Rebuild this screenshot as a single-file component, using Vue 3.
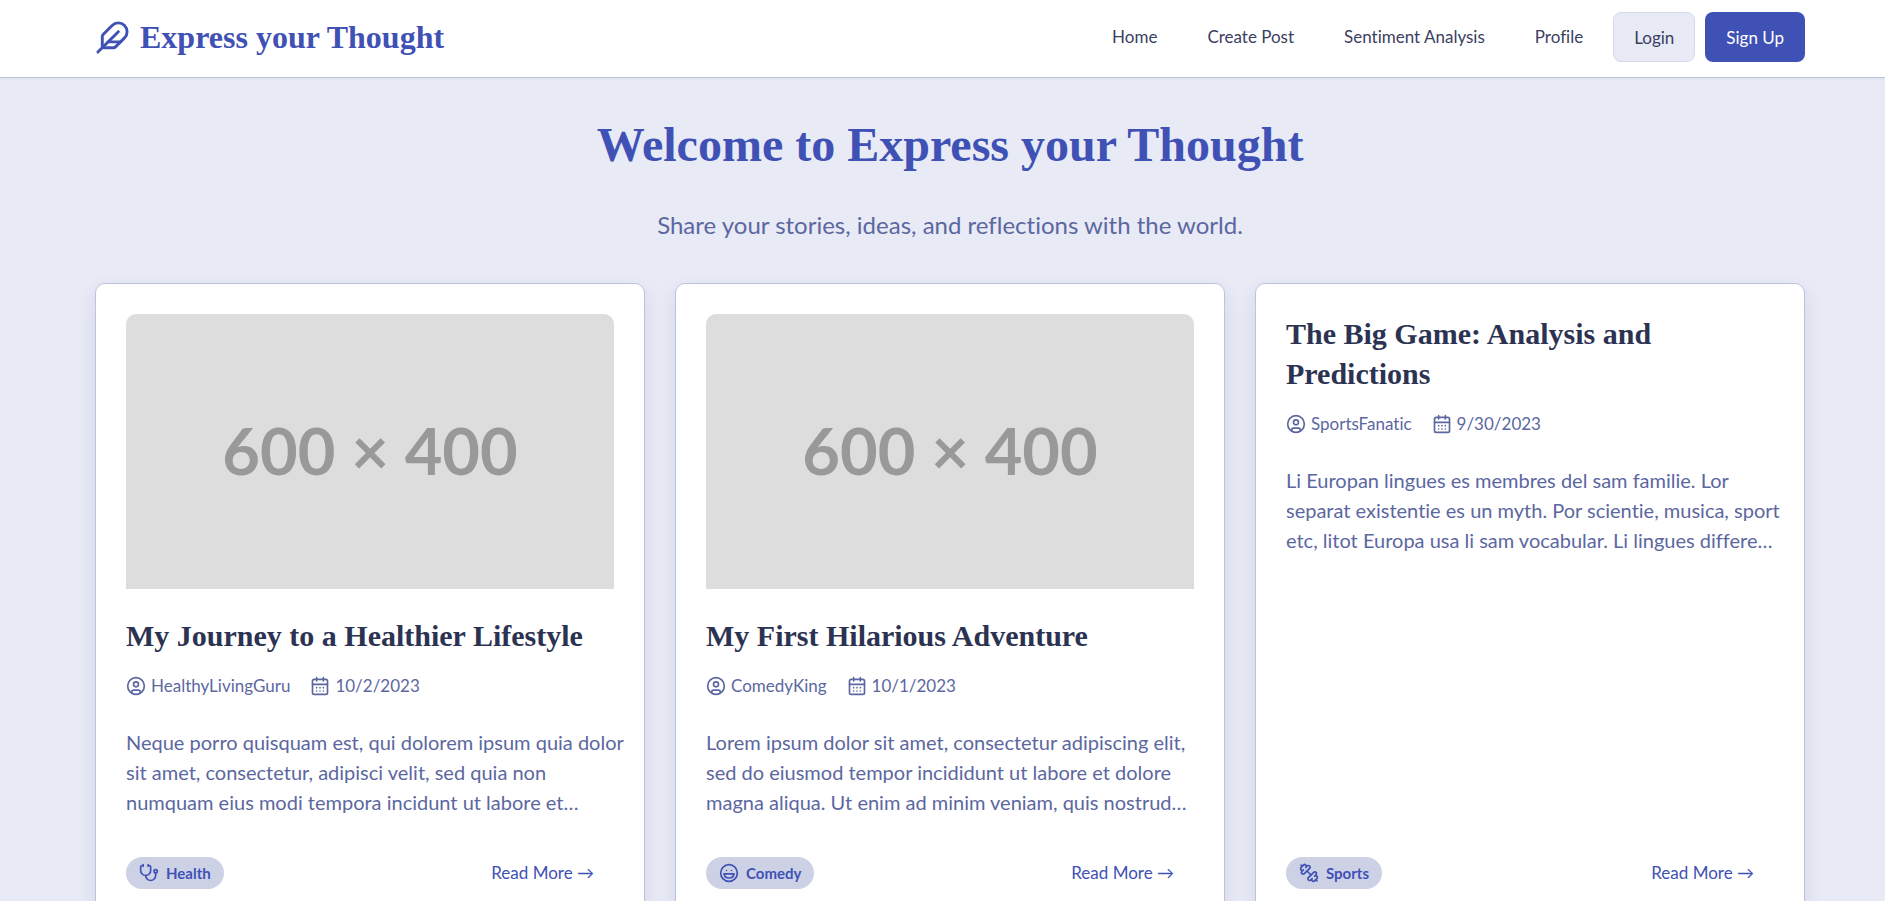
<script setup>
const navLinks = ['Home', 'Create Post', 'Sentiment Analysis', 'Profile']

const posts = [
  {
    title: 'My Journey to a Healthier Lifestyle',
    author: 'HealthyLivingGuru',
    date: '10/2/2023',
    image: true,
    category: 'Health',
    excerpt: [
      'Neque porro quisquam est, qui dolorem ipsum quia dolor',
      'sit amet, consectetur, adipisci velit, sed quia non',
      'numquam eius modi tempora incidunt ut labore et…',
    ].join('\n'),
  },
  {
    title: 'My First Hilarious Adventure',
    author: 'ComedyKing',
    date: '10/1/2023',
    image: true,
    category: 'Comedy',
    excerpt: [
      'Lorem ipsum dolor sit amet, consectetur adipiscing elit,',
      'sed do eiusmod tempor incididunt ut labore et dolore',
      'magna aliqua. Ut enim ad minim veniam, quis nostrud…',
    ].join('\n'),
  },
  {
    title: 'The Big Game: Analysis and Predictions',
    author: 'SportsFanatic',
    date: '9/30/2023',
    image: false,
    category: 'Sports',
    excerpt: [
      'Li Europan lingues es membres del sam familie. Lor',
      'separat existentie es un myth. Por scientie, musica, sport',
      'etc, litot Europa usa li sam vocabular. Li lingues differe…',
    ].join('\n'),
  },
]

const categoryIcons = {
  Health: [
    'M11 2v2',
    'M5 2v2',
    'M5 3H4a2 2 0 0 0-2 2v4a6 6 0 0 0 12 0V5a2 2 0 0 0-2-2h-1',
    'M8 15a6 6 0 0 0 12 0v-3',
    'M22 10a2 2 0 1 1-4 0a2 2 0 1 1 4 0',
  ],
  Comedy: [
    'M22 12a10 10 0 1 1-20 0a10 10 0 1 1 20 0',
    'M18 13a6 6 0 0 1-6 5 6 6 0 0 1-6-5h12Z',
    'M9 9h.01',
    'M15 9h.01',
  ],
  Sports: [
    'M14.4 14.4 9.6 9.6',
    'M18.657 21.485a2 2 0 1 1-2.829-2.828l-1.767 1.768a2 2 0 1 1-2.829-2.829l6.364-6.364a2 2 0 1 1 2.829 2.829l-1.768 1.767a2 2 0 1 1 2.828 2.829z',
    'm21.5 21.5-1.4-1.4',
    'M3.9 3.9 2.5 2.5',
    'M6.404 12.768a2 2 0 1 1-2.829-2.829l1.768-1.767a2 2 0 1 1-2.828-2.829l2.828-2.828a2 2 0 1 1 2.829 2.828l1.767-1.768a2 2 0 1 1 2.829 2.829z',
  ],
}
</script>

<template>
  <div class="page">
    <header class="header">
      <a class="brand" href="#">
        <svg class="icon brand-icon" viewBox="0 0 24 24" aria-hidden="true">
          <path d="M12.67 19a2 2 0 0 0 1.416-.588l6.154-6.172a6 6 0 0 0-8.49-8.49L5.586 9.914A2 2 0 0 0 5 11.328V18a1 1 0 0 0 1 1z" />
          <path d="M16 8 2 22" />
          <path d="M17.5 15H9" />
        </svg>
        <span>Express your Thought</span>
      </a>
      <nav class="nav">
        <a v-for="link in navLinks" :key="link" class="nav-link" href="#">{{ link }}</a>
        <button class="btn btn-light" type="button">Login</button>
        <button class="btn btn-solid" type="button">Sign Up</button>
      </nav>
    </header>

    <main class="main">
      <h1 class="headline">Welcome to Express your Thought</h1>
      <p class="tagline">Share your stories, ideas, and reflections with the world.</p>

      <section class="grid">
        <article v-for="post in posts" :key="post.title" class="card">
          <div v-if="post.image" class="thumb">600 × 400</div>
          <h2 class="title">{{ post.title }}</h2>
          <div class="meta">
            <span class="meta-item">
              <svg class="icon small-icon" viewBox="0 0 24 24" aria-hidden="true">
                <circle cx="12" cy="12" r="10" />
                <circle cx="12" cy="10" r="3" />
                <path d="M7 20.662V19a2 2 0 0 1 2-2h6a2 2 0 0 1 2 2v1.662" />
              </svg>
              <span>{{ post.author }}</span>
            </span>
            <span class="meta-item">
              <svg class="icon small-icon" viewBox="0 0 24 24" aria-hidden="true">
                <path d="M8 2v4M16 2v4M3 10h18" />
                <rect x="3" y="4" width="18" height="18" rx="2" />
                <path d="M8 14h.01M12 14h.01M16 14h.01M8 18h.01M12 18h.01M16 18h.01" />
              </svg>
              <span>{{ post.date }}</span>
            </span>
          </div>
          <p class="excerpt">{{ post.excerpt }}</p>
          <footer class="card-footer">
            <span class="badge">
              <svg class="icon small-icon" viewBox="0 0 24 24" aria-hidden="true">
                <path v-for="d in categoryIcons[post.category]" :key="d" :d="d" />
              </svg>
              <span>{{ post.category }}</span>
            </span>
            <a class="read-more" href="#">Read More →</a>
          </footer>
        </article>
      </section>
    </main>
  </div>
</template>

<style>
body {
  margin: 0;
  background: #e8eaf6;
}
</style>

<style scoped>
.page {
  --indigo: #3f51b5;
  --muted: #5c679f;
  --ink: #2c3352;
  --line: #bec2dc;
  height: 100vh;
  overflow: hidden;
  background: #e8eaf6;
  color: var(--ink);
  font-family: Lato, "Noto Sans", sans-serif;
  font-variant-ligatures: no-common-ligatures;
}

.icon {
  flex: none;
  fill: none;
  stroke: currentColor;
  stroke-width: 2;
  stroke-linecap: round;
  stroke-linejoin: round;
}

.small-icon {
  width: 20px;
  height: 20px;
}

.header {
  display: flex;
  align-items: center;
  justify-content: space-between;
  padding: 12px 80px 15px 95px;
  background: #fff;
  border-bottom: 1px solid var(--line);
  box-shadow: 0 1px 2px rgba(0, 0, 0, 0.05);
}

.brand {
  display: flex;
  align-items: center;
  gap: 10px;
  color: var(--indigo);
  font-family: "Liberation Serif", serif;
  font-size: 32px;
  font-weight: 700;
  line-height: 40px;
  text-decoration: none;
}

.brand-icon {
  width: 35px;
  height: 35px;
}

.nav {
  display: flex;
  align-items: center;
  gap: 10px;
}

.nav-link {
  padding: 0 20px;
  color: #3a405f;
  font-size: 17px;
  line-height: 50px;
  text-decoration: none;
}

.btn {
  box-sizing: border-box;
  height: 50px;
  padding: 0 20px;
  border: 1px solid transparent;
  border-radius: 8px;
  font-family: inherit;
  font-size: 17px;
}

.btn-light {
  background: #e8eaf6;
  border-color: #d5d8ea;
  color: #3a405f;
}

.btn-solid {
  background: var(--indigo);
  color: #fff;
}

.main {
  padding: 37px 80px 40px 95px;
}

.headline {
  margin: 0;
  color: var(--indigo);
  font-family: "Liberation Serif", serif;
  font-size: 48px;
  font-weight: 700;
  line-height: 60px;
  text-align: center;
}

.tagline {
  margin: 30px 0 38px;
  color: var(--muted);
  font-size: 24px;
  line-height: 40px;
  text-align: center;
}

.grid {
  display: grid;
  grid-template-columns: repeat(3, minmax(0, 1fr));
  gap: 30px;
}

.card {
  display: flex;
  flex-direction: column;
  padding: 30px;
  background: #fff;
  border: 1px solid var(--line);
  border-radius: 10px;
  box-shadow: 0 8px 20px rgba(44, 51, 82, 0.1);
}

.thumb {
  display: flex;
  align-items: center;
  justify-content: center;
  box-sizing: border-box;
  height: 275px;
  margin-bottom: 27px;
  padding-bottom: 4px;
  background: #ddd;
  border-radius: 10px 10px 0 0;
  color: #999;
  font-size: 65px;
  font-weight: 700;
}

.title {
  margin: 0;
  font-family: "Liberation Serif", serif;
  font-size: 30px;
  font-weight: 700;
  line-height: 40px;
}

.meta {
  display: flex;
  gap: 20px;
  margin-top: 17px;
  color: var(--muted);
  font-size: 17px;
  line-height: 26px;
}

.meta-item {
  display: flex;
  align-items: center;
  gap: 5px;
}

.excerpt {
  margin: 28px 0 31px;
  color: var(--muted);
  font-size: 20px;
  line-height: 30px;
  white-space: pre;
}

.card-footer {
  display: flex;
  align-items: center;
  justify-content: space-between;
  margin-top: auto;
}

.badge {
  display: flex;
  align-items: center;
  gap: 7px;
  height: 32px;
  padding: 0 13px;
  background: #cdd1e5;
  border-radius: 16px;
  color: var(--indigo);
  font-size: 15px;
  font-weight: 700;
}

.read-more {
  padding: 0 20px;
  color: var(--indigo);
  font-size: 17px;
  line-height: 50px;
  text-decoration: none;
}
</style>
